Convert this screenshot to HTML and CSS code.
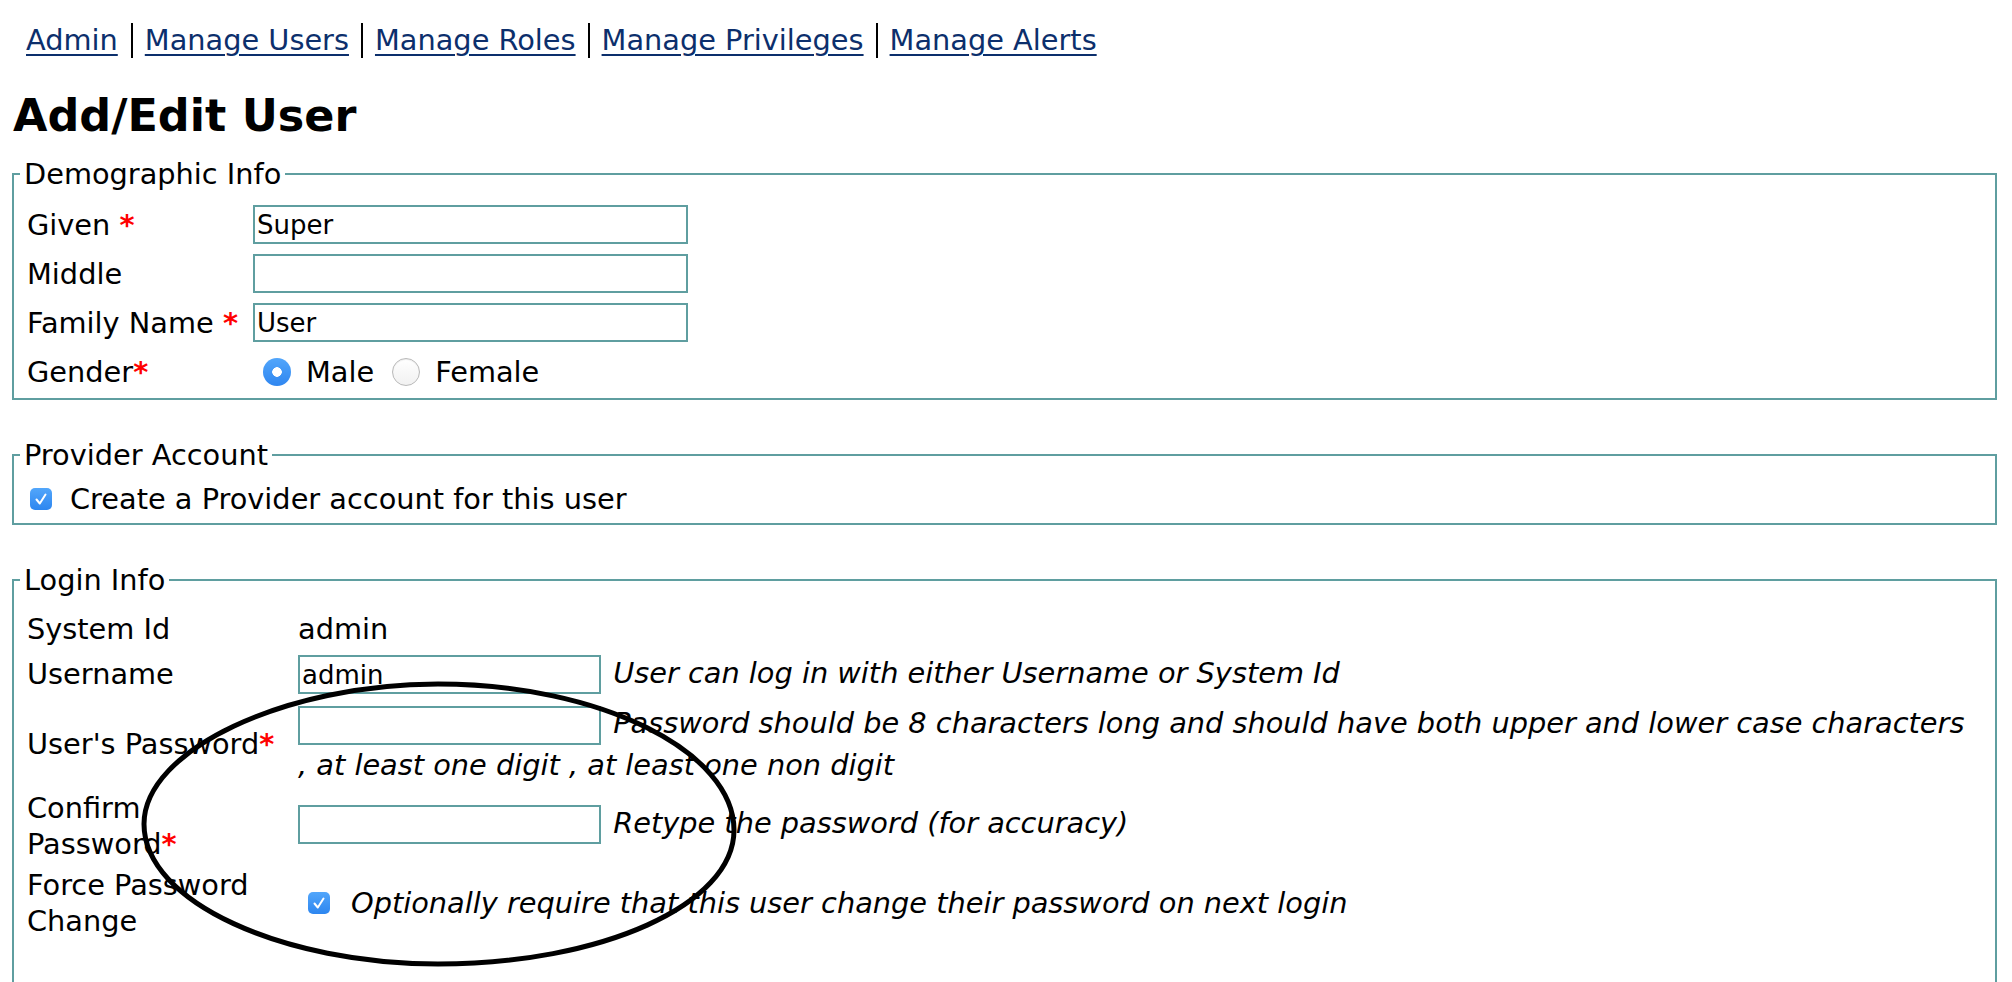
FILE: index.html
```html
<!DOCTYPE html>
<html lang="en">
<head>
<meta charset="utf-8">
<title>Add/Edit User</title>
<link rel="stylesheet" href="styles.css">
</head>
<body>
<div class="page">
  <ul class="nav">
    <li><a href="#">Admin</a></li>
    <li><a href="#">Manage Users</a></li>
    <li><a href="#">Manage Roles</a></li>
    <li><a href="#">Manage Privileges</a></li>
    <li><a href="#">Manage Alerts</a></li>
  </ul>

  <h1 class="title">Add/Edit User</h1>

  <form class="form">
    <fieldset class="box">
      <legend class="legend">Demographic Info</legend>
      <div class="demo-grid">
        <label class="lbl">Given <span class="req">*</span></label>
        <input class="field field-wide" type="text" value="Super">
        <label class="lbl">Middle</label>
        <input class="field field-wide" type="text" value="">
        <label class="lbl">Family Name <span class="req">*</span></label>
        <input class="field field-wide" type="text" value="User">
        <span class="lbl">Gender<span class="req">*</span></span>
        <div class="radios">
          <span class="radio radio-on"></span><span class="radio-text">Male</span>
          <span class="radio radio-off"></span><span class="radio-text">Female</span>
        </div>
      </div>
    </fieldset>

    <fieldset class="box">
      <legend class="legend">Provider Account</legend>
      <div class="check-row provider-row">
        <span class="check"><svg viewBox="0 0 22 22" width="22" height="22"><path d="M6.5 11.5 L9.8 15.5 L15.5 6.5" fill="none" stroke="#fff" stroke-width="2" stroke-linecap="round" stroke-linejoin="round"/></svg></span>
        <span>Create a Provider account for this user</span>
      </div>
    </fieldset>

    <fieldset class="box box-last">
      <legend class="legend">Login Info</legend>
      <div class="login-grid">
        <span class="lbl">System Id</span>
        <span class="val">admin</span>

        <span class="lbl">Username</span>
        <div class="val"><input class="field field-mid" type="text" value="admin"> <em class="hint">User can log in with either Username or System Id</em></div>

        <span class="lbl row-pass">User's Password<span class="req">*</span></span>
        <div class="val row-pass"><input class="field field-mid" type="password" value=""> <em class="hint">Password should be 8 characters long and should have both upper and lower case characters , at least one digit , at least one non digit</em></div>

        <span class="lbl">Confirm Password<span class="req">*</span></span>
        <div class="val row-confirm"><input class="field field-mid" type="password" value=""> <em class="hint">Retype the password (for accuracy)</em></div>

        <span class="lbl">Force Password Change</span>
        <div class="check-row force-row">
          <span class="check"><svg viewBox="0 0 22 22" width="22" height="22"><path d="M6.5 11.5 L9.8 15.5 L15.5 6.5" fill="none" stroke="#fff" stroke-width="2" stroke-linecap="round" stroke-linejoin="round"/></svg></span>
          <em class="hint">Optionally require that this user change their password on next login</em>
        </div>
      </div>
    </fieldset>
  </form>

  <svg class="annotation" width="2012" height="982" viewBox="0 0 2012 982">
    <path d="M438 684 C601 684 734 752 734 830 C734 905 601 964 438 964 C285 964 144 903 144 824 C144 750 285 684 438 684 Z" fill="none" stroke="#000" stroke-width="5"/>
  </svg>
</div>
</body>
</html>
```

FILE: styles.css
```css
html, body {
  margin: 0;
  padding: 0;
}

body {
  font-family: "DejaVu Sans", Verdana, sans-serif;
  font-size: 28.8px;
  color: #000;
  background: #fff;
  overflow: hidden;
}

.page {
  position: relative;
  padding: 23px 15px 0 12px;
}

/* top navigation */
.nav {
  list-style: none;
  margin: 0;
  padding: 0 0 0 14px;
  display: flex;
}

.nav li {
  line-height: 35px;
  padding: 0 12px 0 12px;
  border-left: 2px solid #000;
}

.nav li:first-child {
  border-left: 0;
  padding-left: 0;
  padding-right: 13px;
}

.nav a {
  color: #0c2f6c;
  text-decoration: underline;
  text-decoration-thickness: 2px;
  text-underline-offset: 4px;
}

/* heading */
.title {
  margin: 32px 0 15px 1px;
  font-size: 44.5px;
  line-height: 52px;
  font-weight: bold;
}

/* fieldsets */
.form {
  margin: 0;
}

.box {
  margin: 0 0 38px 0;
  border: 2px solid #5f9ea0;
  padding: 0 20px 7px 6px;
  min-width: 0;
}

.box-last {
  padding-bottom: 80px;
}

.legend {
  padding: 0 4px;
  line-height: 34px;
}

.lbl {
  line-height: 36px;
}

.req {
  color: #ff0000;
  font-weight: bold;
}

.field {
  box-sizing: border-box;
  height: 39px;
  border: 2px solid #5f9ea0;
  padding: 0 2px;
  margin: 0;
  font-family: "DejaVu Sans", Verdana, sans-serif;
  font-size: 26px;
  color: #000;
  background: #fff;
  outline: none;
}

.field-wide {
  width: 435px;
}

.field-mid {
  width: 303px;
  vertical-align: middle;
}

/* demographic grid */
.demo-grid {
  display: grid;
  grid-template-columns: 226px 1fr;
  row-gap: 10px;
  align-items: center;
  padding: 14px 0 0 7px;
}

.radios {
  display: flex;
  align-items: center;
  height: 39px;
}

.radio {
  box-sizing: border-box;
  width: 28px;
  height: 28px;
  border-radius: 50%;
  flex: none;
}

.radio-on {
  margin-left: 10px;
  background: radial-gradient(circle, #fff 0 4.5px, transparent 5px), linear-gradient(#52a6fb, #2f86f0);
}

.radio-off {
  margin-left: 18px;
  border: 1px solid #b9b9b9;
  background: linear-gradient(#ffffff, #f1f1f1);
  box-shadow: inset 0 1px 1px rgba(0, 0, 0, 0.08);
}

.radio-text {
  margin-left: 15px;
}

/* checkbox */
.check-row {
  display: flex;
  align-items: center;
}

.check {
  flex: none;
  width: 22px;
  height: 22px;
  border-radius: 5px;
  background: linear-gradient(#52a6fb, #2d86f0);
  margin-right: 18px;
  display: flex;
}

.provider-row {
  height: 34px;
  padding: 10px 0 0 10px;
}

.force-row {
  padding-left: 10px;
}

/* login grid */
.login-grid {
  display: grid;
  grid-template-columns: 271px 1fr;
  grid-template-rows: 40px 39px auto auto auto;
  row-gap: 5px;
  align-items: center;
  padding: 12px 0 0 7px;
}

.val {
  line-height: 40px;
}

.row-pass {
  margin-top: 5px;
}

.row-confirm {
  margin-bottom: 4px;
}

.hint {
  font-style: italic;
  margin-left: 3px;
}

/* hand-drawn annotation over the form */
.annotation {
  position: absolute;
  left: 0;
  top: 0;
  pointer-events: none;
}
```
